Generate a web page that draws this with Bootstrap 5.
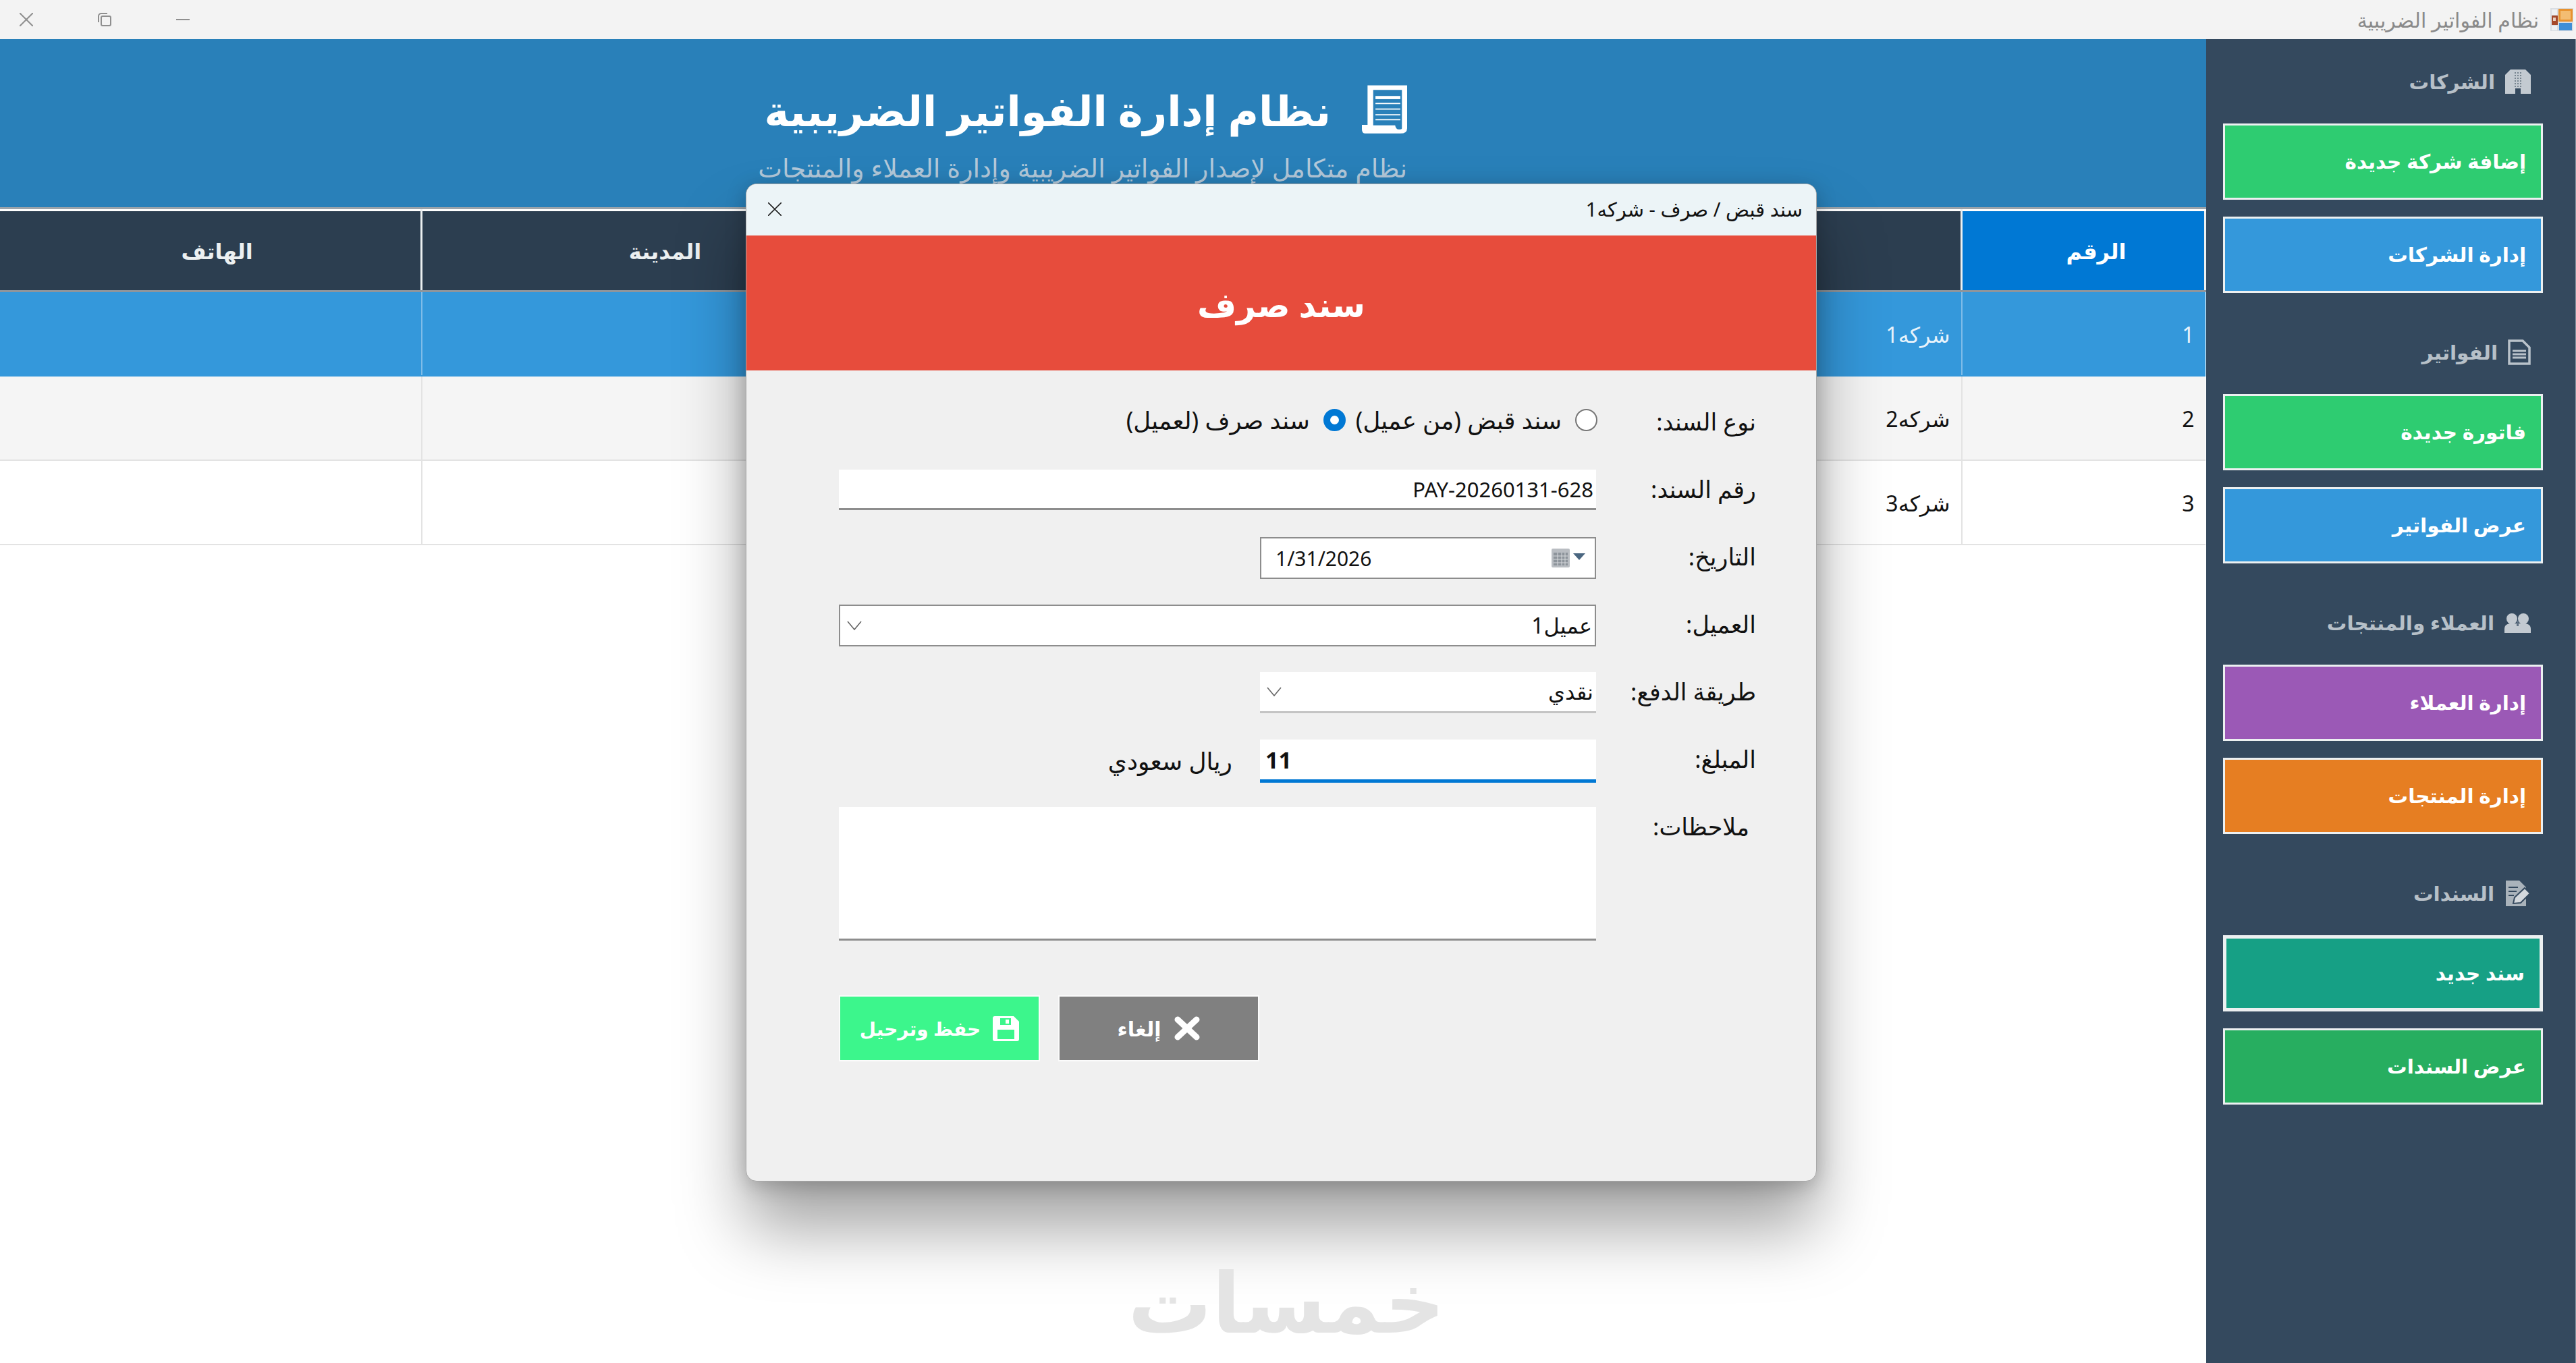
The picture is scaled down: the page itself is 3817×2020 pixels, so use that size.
<!DOCTYPE html>
<html lang="ar" dir="rtl">
<head>
  <meta charset="UTF-8">
  <title>نظام الفواتير الضريبية</title>
  <link href="https://cdn.jsdelivr.net/npm/bootstrap@5.3.3/dist/css/bootstrap.min.css" rel="stylesheet">
  <style>
    html, body { width: 3817px; height: 2020px; overflow: hidden; }
    body { font-family: "Noto Sans", "DejaVu Sans", sans-serif; font-size: 32px; background: #fff; color: #111; position: relative; }
    .title-strip { height: 58px; background: #f3f3f3; padding: 0 4px 0 29px; }
    .title-strip .app-name { color: #8a8a8a; font-size: 30px; margin-right: 17px; }
    .win-btns { gap: 96px; }
    .main-area { height: 1962px; }
    .side-panel { width: 548px; background: #34495e; padding: 0 48px 0 25px; border-right: 1px solid #8a97a3; flex: none; }
    .side-head { height: 125px; padding: 1px 18px 0 0; gap: 15px; color: #b7c0c8; font-weight: 700; font-size: 29.500px; }
    .side-head.next-group { margin-top: 25px; }
    .side-btn { height: 113px; border: 3px solid #ecf0f1; border-radius: 0; color: #fff; font-weight: 700; font-size: 29.500px; text-align: right; padding: 0 22px; display: flex; align-items: center; margin-bottom: 25px; width: 100%; }
    .side-btn:last-child { margin-bottom: 0; }
    .side-btn.b-green { background: #2ecc71; }
    .side-btn.b-blue { background: #3498db; }
    .side-btn.b-purple { background: #9b59b6; }
    .side-btn.b-orange { background: #e67e22; }
    .side-btn.b-teal { background: #16a085; border-width: 5px; }
    .side-btn.b-dgreen { background: #27ae60; }
    .content-area { flex: 1 1 auto; min-width: 0; }
    .top-banner { height: 252px; background: #2980b9; color: #fff; padding: 74px 1184px 0 0; border-bottom: 3px solid #9aa3aa; }
    .banner-title { font-size: 62px; font-weight: 700; line-height: 1; height: 62px; margin: 0; gap: 46px; }
    .banner-icon { margin-top: -2px; flex: none; }
    .banner-sub { font-size: 38px; color: #b4c9da; margin: 35px 0 0 0; line-height: 1; }
    .grid-table { table-layout: fixed; width: 3269px; margin: 0; border-collapse: collapse; }
    .grid-table th { height: 120px; background: #2c3e50; color: #ecf0f1; font-size: 32px; text-align: center; vertical-align: middle; border-top: 3px solid #fff; border-left: 3px solid #ecf0f1; border-bottom: 3px solid #8f959b; padding: 0; }
    .grid-table th.sorted { background: #0078d4; color: #fff; border-right: 3px solid #ecf0f1; padding-left: 38px; }
    .grid-table th.phone-head { padding-left: 20px; }
    .grid-table td { height: 125px; font-size: 32px; padding: 4px 16px 0; vertical-align: middle; border-bottom: 2px solid #e3e3e3; border-left: 2px solid #e3e3e3; color: #111; background: #fff; }
    .grid-table tr.picked td { background: #3498db; color: #e8f3fb; border-left-color: #7fbce8; border-bottom-color: #3498db; }
    .grid-table tr.striped td { background: #f5f5f5; }
    .c-no { width: 361px; }
    .c-name { width: 1560px; }
    .c-city { width: 722px; }
    .c-phone { width: 626px; }
    .voucher-dialog { left: 1105px; top: 272px; width: 1587px; height: 1479px; background: #f0f0f0; border: 1px solid #a8a8a8; border-radius: 16px; box-shadow: 0 70px 100px rgba(0, 0, 0, .36), 0 6px 30px rgba(0, 0, 0, .22); overflow: hidden; z-index: 5; }
    .dialog-title { height: 76px; background: #ecf4f7; padding: 0 20px 3px 32px; font-size: 29px; }
    .dialog-banner { height: 200px; background: #e74c3c; color: #fff; font-size: 50px; font-weight: 700; padding-top: 5px; }
    .voucher-form { display: grid; grid-template-columns: 237px 1122px; grid-template-rows: repeat(6, 62px) 198px 98px; row-gap: 38px; padding: 47px 89px 0 0; align-items: start; }
    .voucher-form .lbl { line-height: 58px; font-size: 35px; color: #111; margin: 0; }
    .voucher-form .notes-lbl { padding-right: 10px; }
    .voucher-form .form-control, .voucher-form .form-select { border-radius: 0; font-size: 31px; color: #111; padding: 0 4px; height: 60px; box-shadow: none; min-height: 0; }
    .num-field { border: 0; border-bottom: 3px solid #8d8d8d; }
    .date-field { width: 498px; height: 62px; background: #fff; border: 2px solid #8d8d8d; direction: ltr; padding: 0 14px 0 21px; font-size: 30px; }
    .voucher-form .form-select { font-size: 32px; background-position: left 10px center; background-size: 22px 14px; background-image: url("data:image/svg+xml,%3csvg xmlns='http://www.w3.org/2000/svg' viewBox='0 0 22 14'%3e%3cpath d='M1 1l10 12L21 1' fill='none' stroke='%23666' stroke-width='1.6'/%3e%3c/svg%3e"); }
    .client-select { height: 62px !important; border: 2px solid #8d8d8d; }
    .pay-select { width: 498px; height: 61px !important; border: 0; border-bottom: 3px solid #c4c4c4; }
    .amount-wrap { gap: 41px; font-size: 36px; }
    .amount-field { width: 498px !important; height: 64px !important; border: 0; border-bottom: 5px solid #0078d4; font-weight: 700; font-size: 34px !important; text-align: left; padding: 0 8px !important; direction: ltr; background: #fff; }
    .notes-field { height: 198px !important; border: 0; border-bottom: 3px solid #8d8d8d; resize: none; }
    .radio-wrap { height: 54px; gap: 15px; margin-right: -2px; }
    .radio-opt { gap: 20px; font-size: 35.600px; }
    .radio-opt .form-check-input { width: 33px; height: 33px; margin: 0; border: 2px solid #777; background-color: #fff; flex: none; }
    .radio-opt .form-check-input:checked { background-color: #fff; border: 10px solid #0078d4; background-image: none; }
    .foot-btns { grid-column: 2; margin-top: 43px; gap: 27px; height: 98px; }
    .act-btn { width: 298px; height: 98px; border-radius: 0; border: 2px solid #fbfbfb; color: #fff; font-weight: 700; font-size: 28px; gap: 18px; padding: 0; }
    .act-save { background: #3cf68c; }
    .act-cancel { background: #808080; font-size: 30px; }
    .brand-mark { left: 1681px; top: 1853px; width: 460px; text-align: center; color: #e4e4e4; font-size: 124px; font-weight: 700; line-height: 1.2; z-index: 6; }
  </style>
</head>
<body>
  <!-- window title bar -->
  <div class="title-strip d-flex align-items-center justify-content-between">
    <div class="d-flex align-items-center">
      <svg width="34" height="34" viewBox="0 0 34 34">
        <rect width="34" height="34" fill="#d9dde2"/>
        <rect x="12" y="1" width="21" height="19" fill="#e8922e"/>
        <rect x="15" y="4" width="15" height="13" fill="#f3bd72"/>
        <rect x="2" y="11" width="9" height="14" fill="#a5482a"/>
        <rect x="4" y="14" width="4" height="5" fill="#e8d0c0"/>
        <rect x="13" y="22" width="19" height="11" fill="#3f8ed6"/>
        <rect x="2" y="2" width="8" height="8" fill="#eef0f2"/>
        <rect x="2" y="26" width="8" height="7" fill="#eef0f2"/>
      </svg>
      <span class="app-name">نظام الفواتير الضريبية</span>
    </div>
    <div class="win-btns d-flex align-items-center">
      <svg width="20" height="2" viewBox="0 0 20 2"><rect width="20" height="2" fill="#8f8f8f"/></svg>
      <svg width="20" height="20" viewBox="0 0 20 20" fill="none" stroke="#8f8f8f" stroke-width="2"><rect x="5" y="5" width="14" height="14" rx="2"/><path d="M1 14V5a4 4 0 0 1 4-4h9"/></svg>
      <svg width="20" height="20" viewBox="0 0 20 20" fill="none" stroke="#8f8f8f" stroke-width="2"><path d="M0 0l20 20M20 0L0 20"/></svg>
    </div>
  </div>

  <div class="main-area d-flex">
    <!-- sidebar -->
    <aside class="side-panel">
      <div class="side-head d-flex align-items-center">
        <svg width="38" height="36" viewBox="0 0 38 36"><path d="M0 8l8-8h22l8 8v28H23V28h-8v8H0z" fill="#c3cad1"/><path d="M15 4v22M19 4v22M23 4v22" stroke="#76848f" stroke-width="2" stroke-dasharray="2 2"/></svg>
        <span>الشركات</span>
      </div>
      <button type="button" class="btn side-btn b-green">إضافة شركة جديدة</button>
      <button type="button" class="btn side-btn b-blue">إدارة الشركات</button>

      <div class="side-head next-group d-flex align-items-center">
        <svg width="34" height="38" viewBox="0 0 34 38"><path d="M2 2h20l10 10v24H2z" fill="none" stroke="#b9c2ca" stroke-width="3.500"/><path d="M7 17h20M7 22h20M7 27h20" stroke="#b9c2ca" stroke-width="3"/></svg>
        <span>الفواتير</span>
      </div>
      <button type="button" class="btn side-btn b-green">فاتورة جديدة</button>
      <button type="button" class="btn side-btn b-blue">عرض الفواتير</button>

      <div class="side-head next-group d-flex align-items-center">
        <svg width="39" height="30" viewBox="0 0 39 30"><circle cx="11" cy="9" r="8" fill="#c3cad1"/><circle cx="28" cy="9" r="8" fill="#c3cad1"/><path d="M0 30v-6c0-6 5-8 10-8h19c5 0 10 2 10 8v6z" fill="#c3cad1"/><path d="M19.500 12v8" stroke="#5f7082" stroke-width="3"/></svg>
        <span>العملاء والمنتجات</span>
      </div>
      <button type="button" class="btn side-btn b-purple">إدارة العملاء</button>
      <button type="button" class="btn side-btn b-orange">إدارة المنتجات</button>

      <div class="side-head next-group d-flex align-items-center">
        <svg width="39" height="38" viewBox="0 0 39 38"><path d="M2 0h20l10 10v28H2z" fill="#aab3bb"/><path d="M6 10h14M6 16h12M6 22h8" stroke="#34495e" stroke-width="2"/><path d="M13 34l2-9L30 11l8 8-14 14z" fill="#d3d8dd" stroke="#34495e" stroke-width="2"/></svg>
        <span>السندات</span>
      </div>
      <button type="button" class="btn side-btn b-teal">سند جديد</button>
      <button type="button" class="btn side-btn b-dgreen">عرض السندات</button>
    </aside>

    <!-- content -->
    <main class="content-area">
      <header class="top-banner">
        <h1 class="banner-title d-flex align-items-center">
          <svg width="67" height="73" viewBox="45 45 200 215" class="banner-icon">
            <path d="M70 45H245V235Q245 258 215 258H60Q45 258 45 240V220H70Z" fill="#fff"/>
            <path d="M95 65H222V235Q222 240 208 240Q195 240 192 222H95Z" fill="#2980b9"/>
            <rect x="105" y="92" width="110" height="14" fill="#fff"/>
            <path d="M105 125H215M105 150H215M105 175H215M105 197H215" stroke="#fff" stroke-width="5"/>
          </svg>
          <span>نظام إدارة الفواتير الضريبية</span>
        </h1>
        <p class="banner-sub">نظام متكامل لإصدار الفواتير الضريبية وإدارة العملاء والمنتجات</p>
      </header>
      <table class="table grid-table">
        <colgroup><col class="c-no"><col class="c-name"><col class="c-city"><col class="c-phone"></colgroup>
        <thead>
          <tr><th class="sorted">الرقم</th><th>اسم الشركة</th><th>المدينة</th><th class="phone-head">الهاتف</th></tr>
        </thead>
        <tbody>
          <tr class="picked"><td>1</td><td>شركه1</td><td></td><td></td></tr>
          <tr class="striped"><td>2</td><td>شركه2</td><td></td><td></td></tr>
          <tr><td>3</td><td>شركه3</td><td></td><td></td></tr>
        </tbody>
      </table>
    </main>
  </div>

  <!-- voucher dialog -->
  <div class="voucher-dialog position-absolute">
    <div class="dialog-title d-flex align-items-center justify-content-between">
      <span>سند قبض / صرف - شركه1</span>
      <svg width="20" height="20" viewBox="0 0 20 20" fill="none" stroke="#222" stroke-width="1.6"><path d="M0 0l20 20M20 0L0 20"/></svg>
    </div>
    <div class="dialog-banner d-flex align-items-center justify-content-center">سند صرف</div>
    <form class="voucher-form">
      <label class="lbl">نوع السند:</label>
      <div class="radio-wrap d-flex align-items-center">
        <label class="radio-opt d-flex align-items-center"><input class="form-check-input" type="radio" name="voucherType"><span>سند قبض (من عميل)</span></label>
        <label class="radio-opt d-flex align-items-center"><input class="form-check-input" type="radio" name="voucherType" checked><span>سند صرف (لعميل)</span></label>
      </div>

      <label class="lbl">رقم السند:</label>
      <input type="text" class="form-control num-field" dir="rtl" value="PAY-20260131-628">

      <label class="lbl">التاريخ:</label>
      <div class="date-field d-flex align-items-center justify-content-between">
        <span>1/31/2026</span>
        <svg width="50" height="30" viewBox="0 0 50 30"><rect x="0" y="1" width="27" height="28" rx="2" fill="#b9bdc2"/><rect x="3" y="7" width="21" height="19" fill="#8d949b"/><path d="M3 12h21M3 17h21M3 22h21M9 7v19M15 7v19M20 7v19" stroke="#d6d9dc" stroke-width="1"/><path d="M32 8h18l-9 10z" fill="#4a6680"/></svg>
      </div>

      <label class="lbl">العميل:</label>
      <select class="form-select client-select"><option>عميل1</option></select>

      <label class="lbl">طريقة الدفع:</label>
      <select class="form-select pay-select"><option>نقدي</option></select>

      <label class="lbl">المبلغ:</label>
      <div class="amount-wrap d-flex align-items-center">
        <input type="text" class="form-control amount-field" value="11">
        <span>ريال سعودي</span>
      </div>

      <label class="lbl notes-lbl">ملاحظات:</label>
      <textarea class="form-control notes-field"></textarea>

      <div></div>
      <div class="foot-btns d-flex justify-content-end">
        <button type="button" class="btn act-btn act-cancel d-flex align-items-center justify-content-center">
          <svg width="40" height="36" viewBox="0 0 40 36" fill="none" stroke="#fff" stroke-width="9" stroke-linecap="round"><path d="M6 5l28 26M34 5L6 31"/></svg>
          <span>إلغاء</span>
        </button>
        <button type="button" class="btn act-btn act-save d-flex align-items-center justify-content-center">
          <svg width="39" height="37" viewBox="0 0 39 37"><path fill-rule="evenodd" d="M3 0h28l8 8v26a3 3 0 0 1-3 3H3a3 3 0 0 1-3-3V3a3 3 0 0 1 3-3zM11 3v10h16V3zM19 5h5v6h-5zM7 20v14h25V20z" fill="#fff"/></svg>
          <span>حفظ وترحيل</span>
        </button>
      </div>
    </form>
  </div>

  <div class="brand-mark position-absolute">خمسات</div>

  <script src="https://cdn.jsdelivr.net/npm/bootstrap@5.3.3/dist/js/bootstrap.bundle.min.js"></script>
</body>
</html>
